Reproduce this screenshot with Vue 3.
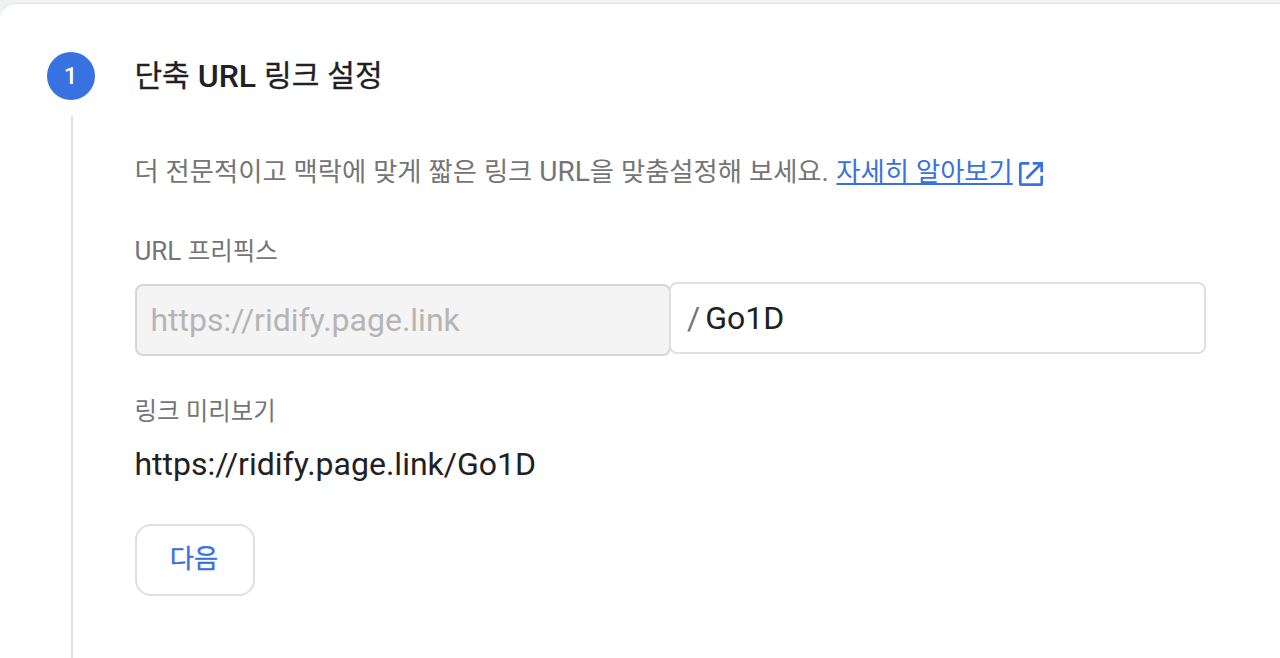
<script setup>
import { ref, h } from 'vue'
const prefix = ref('https://ridify.page.link')
const path = ref('Go1D')

// Hangul runs are set slightly smaller than the Latin text beside them.
const Mixed = ({ text }) =>
  h('span', { class: 'mixed' }, text.split(/([가-힣]+)/).filter(Boolean).map((run) =>
    /[가-힣]/.test(run) ? h('span', { class: 'ko' }, run) : run))
Mixed.props = ['text']
</script>

<template>
  <main class="page">
    <section class="card">
      <div class="rail">
        <div class="num">1</div>
        <div class="line"></div>
      </div>
      <div class="body">
        <h2><Mixed class="strong" text="단축 URL 링크 설정" /></h2>
        <p class="desc">
          <Mixed text="더 전문적이고 맥락에 맞게 짧은 링크 URL을 맞춤설정해 보세요." />
          <a><Mixed class="more" text="자세히 알아보기" /><svg width="26" height="26" viewBox="0 0 26 26"><path d="M11.3 2.3H3.6Q2.3 2.3 2.3 3.6V22.4Q2.3 23.7 3.6 23.7H22.4Q23.7 23.7 23.7 22.4V14.8M14.8 2.3H23.7V11.3M23.2 2.8L8.5 17.5" fill="none" stroke="#3871e0" stroke-width="2.7" /></svg></a>
        </p>
        <div class="label l1"><Mixed text="URL 프리픽스" /></div>
        <div class="fields">
          <div class="field disabled"><span>{{ prefix }}</span></div>
          <div class="field active"><span class="slash">/</span><span class="value">{{ path }}</span></div>
        </div>
        <div class="label l2"><Mixed text="링크 미리보기" /></div>
        <div class="preview"><span>{{ prefix }}/{{ path }}</span></div>
        <button><Mixed class="strong" text="다음" /></button>
      </div>
    </section>
  </main>
</template>

<style>
html, body { margin: 0; overflow: hidden; }
.mixed .ko { font-size: 0.94em; line-height: 1; }
.strong .ko { font-weight: 400; -webkit-text-stroke: 0.3px currentColor; }
h2 .ko { vertical-align: 1px; }
</style>
<style scoped>
* { box-sizing: border-box; }
.page { height: 658px; background: #f0f1f3; padding-top: 3px; overflow: hidden; font-family: Roboto, "Noto Sans CJK KR", sans-serif; }
.card { height: 680px; background: #fff; border-top-left-radius: 16px; border-top: 1px solid #e0e2e4; display: flex; padding: 48px 0 0 47px; }
.rail { width: 48px; display: flex; flex-direction: column; align-items: center; }
.num { width: 48px; height: 48px; border-radius: 50%; background: #3871e0; color: #fff; font-size: 24px; font-weight: 500; line-height: 48px; text-align: center; padding-right: 1px; }
.line { width: 2px; flex: 1; margin: 16px 0 0 2px; background: #e0e0e0; }
.body { margin-left: 40px; width: 1071px; color: #212121; white-space: nowrap; }
h2, .desc, .label, .preview { text-indent: -0.6px; }
h2 { margin: 0; height: 48px; line-height: 48px; font-size: 32px; font-weight: 500; }
.desc { margin: 52px 0 0; height: 40px; line-height: 40px; font-size: 28px; color: #757575; display: flex; }
a { margin-left: 8px; color: #3871e0; display: flex; }
.more { text-decoration: underline; text-decoration-thickness: 2px; text-underline-offset: 2px; }
svg { margin: 9px 0 0 5px; }
.label { height: 32px; line-height: 32px; font-size: 26px; color: #757575; }
.l1 { margin-top: 43px; }
.fields { display: flex; margin-top: 15px; }
.field { height: 72px; border: 2px solid #e0e0e0; border-radius: 8px; font-size: 32px; line-height: 68px; }
.disabled { width: 536px; margin-top: 2px; background: #f4f4f4; border-color: #d6d6d6; color: #b5b5b5; padding-left: 13.4px; }
.active { width: 537px; margin-left: -2px; background: #fff; padding-left: 16px; }
.slash { color: #757575; margin-right: 5px; }
.l2 { margin-top: 39px; }
.preview { margin-top: 16px; height: 42px; line-height: 42px; font-size: 32px; }
button { display: block; margin-top: 39px; width: 120px; height: 72px; background: #fff; border: 2px solid #e0e0e0; border-radius: 16px; padding: 0 2px 3px 0; font: 500 28px Roboto, "Noto Sans CJK KR", sans-serif; color: #3871e0; }
</style>
